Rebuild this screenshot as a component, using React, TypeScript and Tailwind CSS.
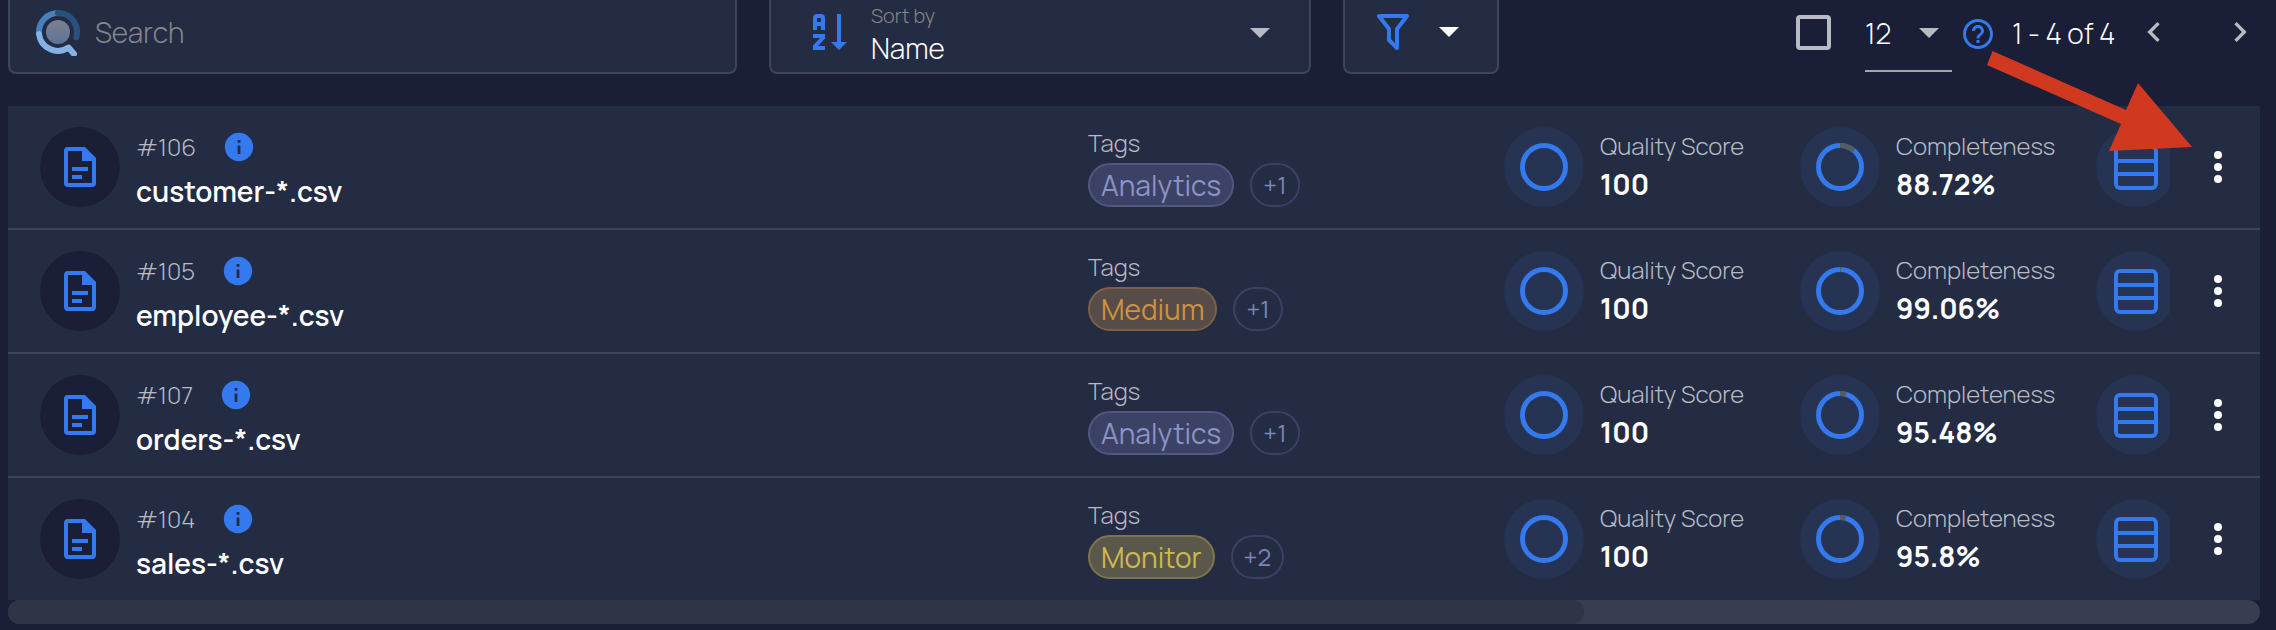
import React from "react";
import { MdInfo, MdHelpOutline, MdChevronLeft, MdChevronRight } from "react-icons/md";

type Tone = "indigo" | "orange" | "yellow";

interface FileRow {
  id: number;
  name: string;
  tag: string;
  tone: Tone;
  more: number;
  quality: number;
  completeness: number;
}

const rows: FileRow[] = [
  { id: 106, name: "customer-*.csv", tag: "Analytics", tone: "indigo", more: 1, quality: 100, completeness: 88.72 },
  { id: 105, name: "employee-*.csv", tag: "Medium", tone: "orange", more: 1, quality: 100, completeness: 99.06 },
  { id: 107, name: "orders-*.csv", tag: "Analytics", tone: "indigo", more: 1, quality: 100, completeness: 95.48 },
  { id: 104, name: "sales-*.csv", tag: "Monitor", tone: "yellow", more: 2, quality: 100, completeness: 95.8 },
];

const tones: Record<Tone, string> = {
  indigo: "border-[#50587f] bg-[#3b4266] text-[#8b93c3]",
  orange: "border-[#7d6046] bg-[#574c47] text-[#cf923f]",
  yellow: "border-[#7f754a] bg-[#5a584a] text-[#cfb94e]",
};

function SearchLogo() {
  return (
    <svg className="h-12 w-12 shrink-0" viewBox="0 0 48 48" fill="none" strokeLinecap="round" aria-hidden="true">
      <defs>
        <linearGradient id="lens" x1="0" y1="0" x2="0" y2="1">
          <stop offset="0" stopColor="#7a8190" />
          <stop offset="1" stopColor="#5c7398" />
        </linearGradient>
      </defs>
      <circle cx="24" cy="24" r="12" fill="url(#lens)" />
      <path d="M5 24.5A19 19 0 0 1 24 5" stroke="#4a7fba" strokeWidth="6" />
      <path d="M24 5A19 19 0 0 1 42.2 29.5" stroke="#28517d" strokeWidth="6" />
      <path d="M5 26A19 19 0 0 0 34.5 39.5L40 46" stroke="#85b1e6" strokeWidth="6" strokeLinejoin="round" />
    </svg>
  );
}

function SortIcon() {
  return (
    <svg className="h-9 w-[34px] shrink-0" viewBox="0 0 34 36" fill="#3579ef" aria-hidden="true">
      <path fillRule="evenodd" d="M0 16V4a4 4 0 0 1 4-4h4a4 4 0 0 1 4 4v12H8v-4H4v4zM4 8h4V4H4z" />
      <path d="M0 20h12v4.500L5 32h7v4H0v-4.500L7 24H0z" />
      <path d="M24 0h4v28h6l-8 8-8-8h6z" />
    </svg>
  );
}

function FilterIcon() {
  return (
    <svg className="h-9 w-8 shrink-0" viewBox="0 0 32 36" fill="none" stroke="#3579ef" strokeWidth="4" strokeLinejoin="round" aria-hidden="true">
      <path d="M2 2h28L20 15v19l-8-8V15z" />
    </svg>
  );
}

function Caret({ className }: { className: string }) {
  return (
    <svg className={`h-[10px] w-5 shrink-0 ${className}`} viewBox="0 0 20 10" fill="currentColor" aria-hidden="true">
      <path d="M0 0h20L10 10z" />
    </svg>
  );
}

function DocIcon() {
  return (
    <svg className="h-10 w-8" viewBox="0 0 32 40" fill="#3579ef" aria-hidden="true">
      <path fillRule="evenodd" d="M4 0h17l11 11v25a4 4 0 0 1-4 4H4a4 4 0 0 1-4-4V4a4 4 0 0 1 4-4zM4 4v32h24V14H18V4z" />
      <path d="M8 20h16v4H8zM8 28h10v4H8z" />
    </svg>
  );
}

function TableIcon() {
  return (
    <svg className="h-[45px] w-11 shrink-0" viewBox="0 0 44 45" fill="none" stroke="#3579ef" strokeWidth="4" aria-hidden="true">
      <rect x="2" y="2" width="40" height="41" rx="4" />
      <path d="M2 16h40M2 29h40" />
    </svg>
  );
}

function Ring({ value }: { value: number }) {
  const around = 2 * Math.PI * 21.5;
  const gap = (around * (100 - value)) / 100;
  return (
    <span className="flex size-20 shrink-0 items-center justify-center rounded-full bg-[#263352]">
      <svg className="size-12 -rotate-90" viewBox="0 0 48 48" fill="none" strokeWidth="5" aria-hidden="true">
        <circle cx="24" cy="24" r="21.5" stroke="#3579ef" />
        <circle cx="24" cy="24" r="21.5" stroke="#585b60" strokeDasharray={`${gap} ${around}`} />
      </svg>
    </span>
  );
}

function Metric({ label, value, suffix = "" }: { label: string; value: number; suffix?: string }) {
  return (
    <div className="flex items-center gap-4">
      <Ring value={value} />
      <div className="flex flex-col gap-0.5">
        <span className="text-[24px] leading-8 font-light whitespace-nowrap text-[#b8bbc3]">{label}</span>
        <span className="text-[28px] leading-10 font-bold text-white">
          {value}
          {suffix}
        </span>
      </div>
    </div>
  );
}

function Row({ row }: { row: FileRow }) {
  return (
    <li className="grid grid-cols-[minmax(0,1fr)_416px_296px_296px_74px_90px] items-center border-b-2 border-[#3e455a] py-[21px] last:border-b-0">
      <div className="flex h-20 gap-4 pl-8">
        <span className="flex size-20 shrink-0 items-center justify-center rounded-full bg-[#1a1f37]">
          <DocIcon />
        </span>
        <div className="flex flex-col gap-2 pt-1">
          <div className="flex items-center gap-7">
            <span className="text-[24px] leading-8 font-light text-[#b8bbc3]">#{row.id}</span>
            <button type="button" aria-label={`About ${row.name}`} className="-m-0.5">
              <MdInfo className="size-[34px] text-[#3579ef]" />
            </button>
          </div>
          <span className="text-[28px] leading-10 font-semibold text-white">{row.name}</span>
        </div>
      </div>
      <div className="flex flex-col gap-1">
        <span className="text-[24px] leading-8 font-light text-[#b8bbc3]">Tags</span>
        <div className="flex gap-4">
          <span className={`rounded-[22px] border-2 px-[11px] text-[28px] leading-10 ${tones[row.tone]}`}>{row.tag}</span>
          <span className="rounded-[22px] border-2 border-[#3a4263] px-[11px] text-[24px] leading-10 text-[#7b86b8]">+{row.more}</span>
        </div>
      </div>
      <Metric label="Quality Score" value={row.quality} />
      <Metric label="Completeness" value={row.completeness} suffix="%" />
      <button type="button" aria-label={`Columns of ${row.name}`} className="overflow-hidden">
        <span className="flex size-20 items-center justify-center rounded-full bg-[#263352]">
          <TableIcon />
        </span>
      </button>
      <button type="button" aria-label={`Actions for ${row.name}`} className="flex h-20 flex-col items-center justify-center gap-1 pl-1.5">
        <span className="size-2 rounded-full bg-white" />
        <span className="size-2 rounded-full bg-white" />
        <span className="size-2 rounded-full bg-white" />
      </button>
    </li>
  );
}

export default function App() {
  return (
    <main className="relative min-h-screen overflow-hidden bg-[#1a1f37] pr-4 pl-2 font-['Manrope','Inter',sans-serif] text-white">
      <header className="flex h-[74px]">
        <label className="flex w-[729px] items-start rounded-b-lg border-2 border-t-0 border-[#3e455a] bg-[#242c44] pt-2 pl-6">
          <SearchLogo />
          <input
            type="search"
            aria-label="Search"
            placeholder="Search"
            className="ml-[13px] h-12 min-w-0 flex-1 bg-transparent text-[28px] leading-10 font-light outline-none placeholder:text-[#85868a]"
          />
        </label>
        <div className="ml-8 flex w-[542px] items-start rounded-b-lg border-2 border-t-0 border-[#3e455a] bg-[#242c44] pl-[42px]">
          <span className="pt-[14px]">
            <SortIcon />
          </span>
          <div className="ml-6 flex flex-1 flex-col">
            <label htmlFor="sort" className="text-[20px] leading-8 font-light text-[#85868a]">
              Sort by
            </label>
            <select id="sort" className="h-8 appearance-none bg-transparent text-[28px] leading-8 font-light text-white outline-none">
              <option>Name</option>
            </select>
          </div>
          <span className="pt-7 pr-[39px]">
            <Caret className="text-[#b8bbc3]" />
          </span>
        </div>
        <button type="button" aria-label="Filter" className="ml-8 flex w-[156px] items-center gap-[30px] rounded-b-lg border-2 border-t-0 border-[#3e455a] bg-[#242c44] pb-2 pl-8">
          <FilterIcon />
          <Caret className="text-white" />
        </button>
        <div className="ml-auto flex">
          <input
            type="checkbox"
            aria-label="Select all"
            className="mt-[15px] size-[35px] appearance-none rounded-[4px] border-4 border-[#b8bbc3]"
          />
          <div className="ml-[34px] flex h-[72px] w-[87px] items-center border-b-2 border-[#a3a5af] pb-1">
            <select aria-label="Rows per page" className="h-10 w-[54px] appearance-none bg-transparent text-[28px] leading-10 font-light text-white outline-none">
              <option>12</option>
            </select>
            <Caret className="text-[#b8bbc3]" />
          </div>
          <button type="button" aria-label="Help" className="ml-2 flex h-[68px] items-center">
            <MdHelpOutline className="size-9 text-[#3579ef]" />
          </button>
          <span className="ml-4 w-[110px] pt-[13px] text-[28px] leading-10 font-light whitespace-nowrap">1 - 4 of 4</span>
          <button type="button" aria-label="Previous page" className="ml-3 flex h-16 items-center">
            <MdChevronLeft className="size-10 text-[#b8bbc3]" />
          </button>
          <button type="button" aria-label="Next page" className="ml-[46px] flex h-16 items-center">
            <MdChevronRight className="size-10 text-[#b8bbc3]" />
          </button>
        </div>
      </header>

      <ul className="mt-8 bg-[#242c44]">
        {rows.map((row) => (
          <Row key={row.id} row={row} />
        ))}
      </ul>

      <div className="h-6 rounded-full bg-[#383d52]">
        <div className="h-full w-[70%] rounded-full bg-[#2f3447]" />
      </div>

      <svg className="pointer-events-none absolute top-[51px] right-[83px] h-[102px] w-[206px]" viewBox="0 0 206 102" fill="#d13820" aria-hidden="true">
        <path d="M5.500 0L139 59l12-27 54 64-83 4 12-27L0 14z" />
      </svg>
    </main>
  );
}
